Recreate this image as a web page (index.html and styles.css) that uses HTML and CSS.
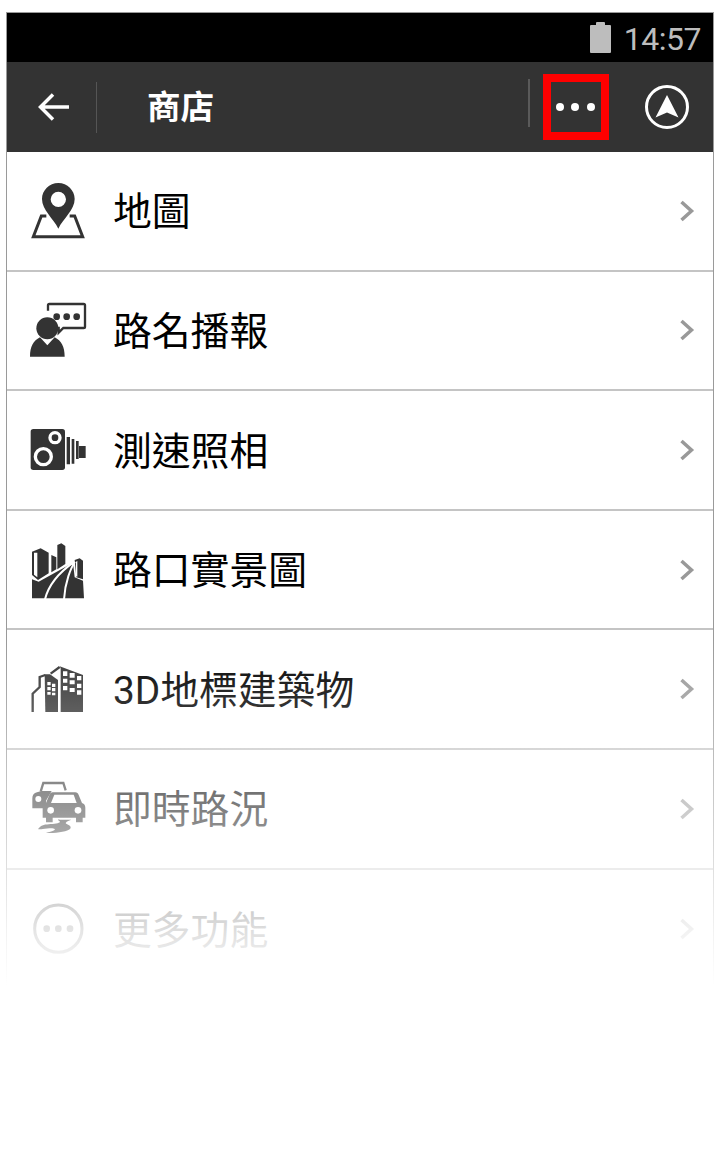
FILE: index.html
```html
<!DOCTYPE html>
<html lang="zh-Hant">
<head>
<meta charset="utf-8">
<title>商店</title>
<link rel="stylesheet" href="styles.css">
</head>
<body>
<div class="frame">
  <div class="status">
    <svg class="battery" viewBox="0 0 21 31"><path d="M6 3V1a1 1 0 0 1 1-1h7a1 1 0 0 1 1 1v2h5a1 1 0 0 1 1 1v26a1 1 0 0 1-1 1H1a1 1 0 0 1-1-1V4a1 1 0 0 1 1-1z"/></svg>
    <span class="time">14:57</span>
  </div>
  <header class="toolbar">
    <button class="back" aria-label="返回">
      <svg viewBox="0 0 32 28"><path d="M31 14H3M15 1.500 2.500 14 15 26.500"/></svg>
    </button>
    <h1 class="title">商店</h1>
    <div class="more"><i></i><i></i><i></i></div>
    <svg class="nav" viewBox="0 0 46 46"><circle cx="23" cy="23" r="20.500"/><path class="nav-arrow" d="M23 11 34.500 33.500 23 28.500 11.500 33.500z"/></svg>
  </header>
  <ul class="list">
    <li class="row">
      <svg class="icon" viewBox="60 513 240 240"><path d="M175 549c-27 0-49 22-49 48 0 33 34 58 49 89 15-31 49-56 49-89 0-26-22-48-49-48zm0 26a23 23 0 1 1 0 46 23 23 0 0 1 0-46z"/><path class="line" d="M139 648h-15L100 710h148l-24-62h-15"/></svg>
      <span class="label">地圖</span>
      <svg class="chev" viewBox="0 0 16 24"><path d="M2.500 3 12.500 12 2.500 21"/></svg>
    </li>
    <li class="row">
      <svg class="icon" viewBox="0 0 240 240"><circle cx="82" cy="115" r="33"/><path d="M30 200c0-30 10-48 30-58l22 24 22-24c20 10 30 28 30 58z"/><path class="line thin" d="M84 62V46a4 4 0 0 1 4-4h103a4 4 0 0 1 4 4v64a4 4 0 0 1-4 4h-61l-14 14v-14h-6"/><circle cx="110" cy="80" r="10"/><circle cx="140" cy="80" r="10"/><circle cx="170" cy="80" r="10"/></svg>
      <span class="label">路名播報</span>
      <svg class="chev" viewBox="0 0 16 24"><path d="M2.500 3 12.500 12 2.500 21"/></svg>
    </li>
    <li class="row">
      <svg class="icon" viewBox="0 -15 240 240"><rect x="32" y="42" width="103" height="123" rx="8"/><circle class="ring" cx="70" cy="125" r="24"/><circle class="ring" cx="105" cy="68" r="15"/><path d="M140 66h10v82h-10zM155 72h8v74h-8zM168 78h8v54h-8zM177 93h20v36h-20z"/></svg>
      <span class="label">測速照相</span>
      <svg class="chev" viewBox="0 0 16 24"><path d="M2.500 3 12.500 12 2.500 21"/></svg>
    </li>
    <li class="row">
      <svg class="icon" viewBox="0 0 240 240"><path d="M36 65 62 55l24 13v62l-32 20-18-15zM94 75l15 7v36l-15 9zM112 45l12-5 12 8v54l-24 16zM164 90l15-5 10 7v56l-20-6z"/><path class="white" d="M42 68v66l10 8V68zM168 95v44l4 1V93z"/><path d="M36 148l20 7L159 98l5 44 25 10 3 53H36z"/><path class="road" d="M162 96c-20 14-72 50-87 112M165 96c-12 16-30 60-33 112"/></svg>
      <span class="label">路口實景圖</span>
      <svg class="chev" viewBox="0 0 16 24"><path d="M2.500 3 12.500 12 2.500 21"/></svg>
    </li>
    <li class="row">
      <svg class="icon" viewBox="0 0 240 240"><path class="line thin" d="M38 189v-55l21-20V84l17-6M92 74l27-20"/><path d="M74 76l16 0 24 17v96H76z"/><path d="M119 52l70 26v111h-67V58z"/><path class="white" d="M82 99h10v10H82zM96 104h10v10H96zM82 114h10v10H82zM96 117h10v10H96zM82 129h10v8H82zM96 131h10v8H96zM129 67h13v14h-13zM149 72h15v14h-15zM171 81h13v13h-13zM129 89h13v12h-13zM149 94h15v12h-15zM171 104h13v13h-13zM129 111h13v13h-13zM149 117h15v12h-15zM171 124h13v13h-13z"/></svg>
      <span class="label">3D地標建築物</span>
      <svg class="chev" viewBox="0 0 16 24"><path d="M2.500 3 12.500 12 2.500 21"/></svg>
    </li>
    <li class="row">
      <svg class="icon" viewBox="0 0 240 240"><path class="line thin" d="M62 68l8-26h60l7 22"/><path d="M37 118V88c0-10 5-16 14-18l14-4h30L78 95v23z"/><circle class="white" cx="55" cy="90" r="9"/><path d="M98 70h68c5 0 8 3 10 8l10 24c7 2 10 8 10 14v30h-8v14h-20v-14H98v14H78v-14H68v-30c0-6 3-12 10-14l10-24c2-5 5-8 10-8z"/><path class="white" d="M103 77h58l9 25H93z"/><circle class="white" cx="92" cy="124" r="10"/><circle class="white" cx="174" cy="124" r="10"/><path d="M118 152h36c-10 3-22 9-14 13s16 8 10 15-34 12-62 12l-10-1c14-2 30-7 26-11s-20-2-36 0-16 2-8-6 22-8 38-9 26-5 20-9-4-3 0-5z"/></svg>
      <span class="label">即時路況</span>
      <svg class="chev" viewBox="0 0 16 24"><path d="M2.500 3 12.500 12 2.500 21"/></svg>
    </li>
    <li class="row last">
      <svg class="icon" viewBox="60 84 240 240"><circle class="outline" cx="175" cy="203" r="71"/><circle cx="140" cy="203" r="10"/><circle cx="175" cy="203" r="10"/><circle cx="210" cy="203" r="10"/></svg>
      <span class="label">更多功能</span>
      <svg class="chev" viewBox="0 0 16 24"><path d="M2.500 3 12.500 12 2.500 21"/></svg>
    </li>
  </ul>
  <div class="fade"></div>
</div>
</body>
</html>
```
FILE: styles.css
```css
* { box-sizing: border-box; }
html, body { margin: 0; background: #fff; }
body { padding: 12px 6px 0; font-family: "Noto Sans CJK TC", sans-serif; }

.frame {
  position: relative;
  border: 1px solid #9a9a9a;
  border-bottom: 0;
}

.status {
  height: 49px;
  background: #000;
  display: flex;
  align-items: center;
  justify-content: flex-end;
  padding-right: 12px;
}
.battery { width: 21px; height: 31px; fill: #bdbdbd; margin: 0 13px 1px 0; }
.time { font: 32px/1 Roboto, sans-serif; color: #bdbdbd; letter-spacing: -0.5px; margin-top: 2px; }

.toolbar {
  height: 90px;
  background: #333;
  display: flex;
  align-items: center;
}
.back {
  width: 90px;
  height: 51px;
  padding: 0 0 0 31px;
  background: none;
  border: 0;
  border-right: 1px solid #555;
  display: flex;
  align-items: center;
}
.back svg { width: 32px; height: 28px; fill: none; stroke: #fff; stroke-width: 3.5; }
.title {
  margin: 0 0 5px 50px;
  flex: 1;
  font-size: 33.500px;
  font-weight: 700;
  color: #fff;
  line-height: 1;
}
.more {
  width: 66px;
  height: 66px;
  margin: 0 35px 0 0;
  padding-right: 2px;
  border: 8px solid #f00;
  display: flex;
  align-items: center;
  justify-content: center;
  gap: 7.500px;
  position: relative;
}
.more::before {
  content: "";
  position: absolute;
  left: -23px;
  top: -3px;
  width: 2px;
  height: 48px;
  background: #5a5a5a;
}
.more i { width: 8px; height: 8px; border-radius: 50%; background: #fff; }
.nav { width: 46px; height: 46px; margin-right: 23px; }
.nav circle { fill: none; stroke: #fff; stroke-width: 3; }
.nav-arrow { fill: #fff; }

.list { margin: 0; padding: 0; list-style: none; }
.row {
  height: 119.600px;
  display: flex;
  align-items: center;
  padding: 0 18px 0 13px;
  border-bottom: 2px solid #c4c4c4;
}
.row.last { border-bottom: 0; }
.icon { width: 80px; height: 80px; flex: none; fill: #333; }
.line { fill: none; stroke: #333; stroke-width: 9; }
.line.thin { stroke-width: 7; }
.ring { fill: #333; stroke: #fff; stroke-width: 10; }
.outline { fill: none; stroke: #333; stroke-width: 9; }
.white { fill: #fff; }
.road { fill: none; stroke: #fff; stroke-width: 6; }
.label {
  flex: 1;
  margin: 4px 0 0 13px;
  font-family: Roboto, "Noto Sans CJK TC", sans-serif;
  font-size: 38.800px;
  line-height: 1;
  color: #000;
}
.chev { width: 16px; height: 24px; flex: none; fill: none; stroke: #999; stroke-width: 3.500; }

.fade {
  position: absolute;
  left: -1px;
  right: -1px;
  bottom: 0;
  height: 350px;
  background: linear-gradient(to bottom, rgba(255,255,255,0) 0, rgba(255,255,255,0.5) 49%, rgba(255,255,255,0.88) 84%, #fff 99%);
}
```
